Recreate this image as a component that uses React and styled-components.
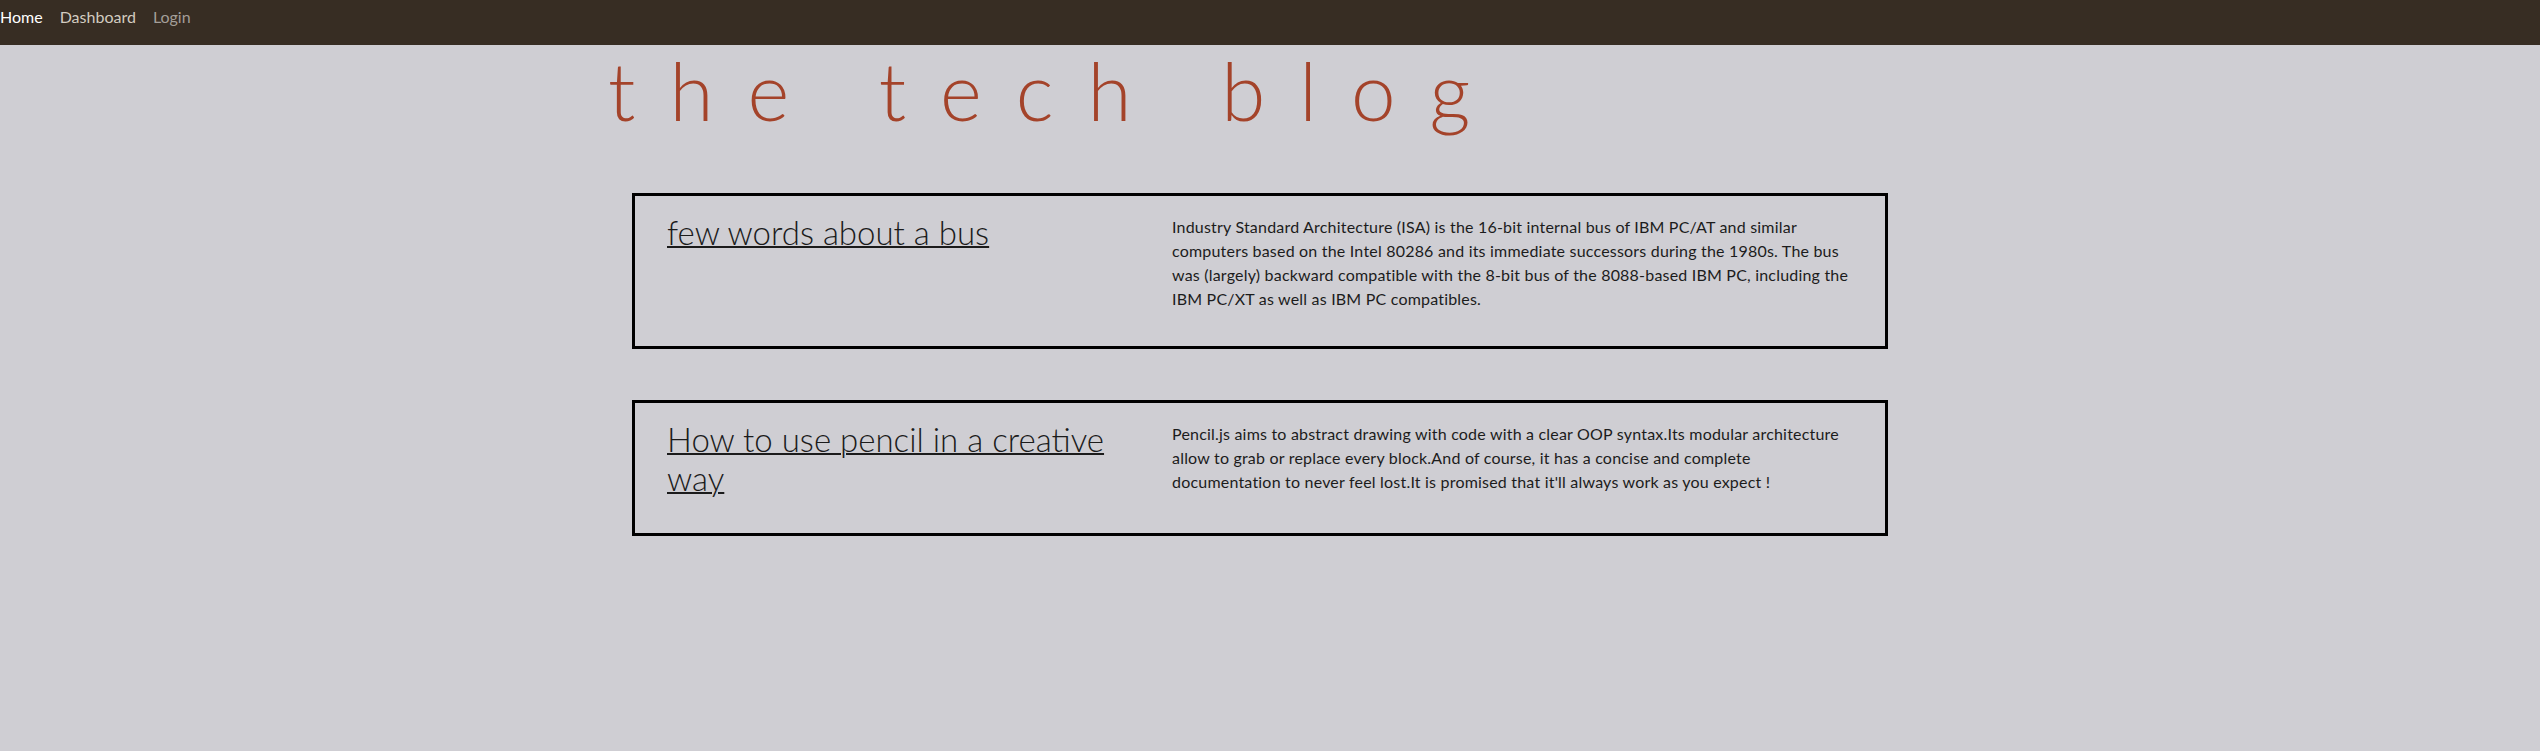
import React from 'react'
import styled, { createGlobalStyle } from 'styled-components'

const GlobalStyle = createGlobalStyle`
  html, body {
    margin: 0;
    padding: 0;
    background-color: #cfced3;
    font-family: Lato, "Open Sans", sans-serif;
  }
  body {
    min-height: 751px;
  }
`

const posts = [
  {
    title: 'few words about a bus',
    body: 'Industry Standard Architecture (ISA) is the 16-bit internal bus of IBM PC/AT and similar computers based on the Intel 80286 and its immediate successors during the 1980s. The bus was (largely) backward compatible with the 8-bit bus of the 8088-based IBM PC, including the IBM PC/XT as well as IBM PC compatibles.',
  },
  {
    title: 'How to use pencil in a creative way',
    body: "Pencil.js aims to abstract drawing with code with a clear OOP syntax.Its modular architecture allow to grab or replace every block.And of course, it has a concise and complete documentation to never feel lost.It is promised that it'll always work as you expect !",
  },
]

const App = () => {
  return (
    <>
      <GlobalStyle />
      <Nav>
        <NavLink $tone="#ffffff">Home</NavLink>
        <NavLink $tone="#d3ccc0">Dashboard</NavLink>
        <NavLink $tone="#a39e98">Login</NavLink>
      </Nav>
      <Page>
        <Title>the tech blog</Title>
        <PostList>
          {posts.map((post) => (
            <PostCard key={post.title}>
              <PostTitle href="#">{post.title}</PostTitle>
              <PostBody>{post.body}</PostBody>
            </PostCard>
          ))}
        </PostList>
      </Page>
    </>
  )
}

export default App

const Nav = styled.nav`
  height: 45px;
  background-color: #372d23;
  display: flex;
  align-items: flex-start;
  gap: 17px;
  padding-top: 5px;
  box-sizing: border-box;
`

const NavLink = styled.a`
  color: ${(p) => p.$tone};
  font-size: 16px;
  line-height: 24px;
  text-decoration: none;
  cursor: pointer;
`

const Page = styled.main`
  width: 1276px;
  margin: 0 auto;
`

const Title = styled.h1`
  margin: 0 0 0 -24px;
  font-size: 80px;
  font-weight: 300;
  line-height: 90px;
  letter-spacing: 34px;
  color: #a4432a;
  white-space: nowrap;
`

const PostList = styled.section`
  display: flex;
  flex-direction: column;
  gap: 51px;
  margin-top: 58px;
  width: 1256px;
`

const PostCard = styled.article`
  display: grid;
  grid-template-columns: 505px 1fr;
  align-items: start;
  padding: 16px 32px 35px;
  border: 3px solid #000;
`

const PostTitle = styled.a`
  display: block;
  max-width: 470px;
  padding-top: 1px;
  font-size: 33px;
  font-weight: 300;
  line-height: 39px;
  color: #1b1b1b;
  text-decoration: underline;
  text-decoration-thickness: 2px;
`

const PostBody = styled.p`
  margin: 0;
  padding-top: 3px;
  font-size: 16px;
  line-height: 24px;
  letter-spacing: 0.2px;
  color: #1c1c1c;
`
